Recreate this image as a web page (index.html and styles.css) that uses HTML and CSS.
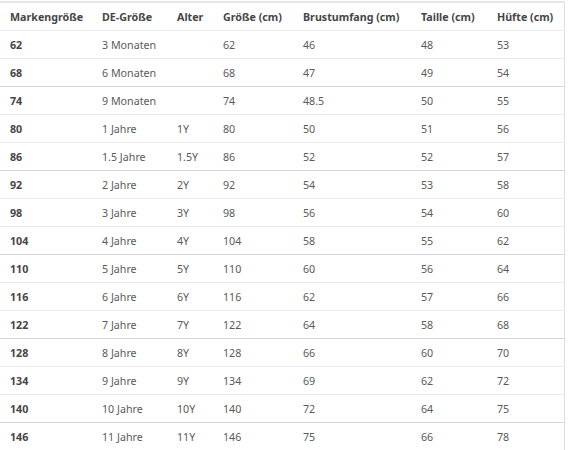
FILE: index.html
```html
<!DOCTYPE html>
<html lang="de">
<head>
<meta charset="utf-8">
<link rel="stylesheet" href="styles.css">
</head>
<body>
<div class="frame">
<table class="size-table">
  <colgroup>
    <col class="c1"><col class="c2"><col class="c3"><col class="c4"><col class="c5"><col class="c6"><col class="c7">
  </colgroup>
  <thead>
    <tr><th>Markengröße</th><th>DE-Größe</th><th>Alter</th><th>Größe (cm)</th><th>Brustumfang (cm)</th><th>Taille (cm)</th><th>Hüfte (cm)</th></tr>
  </thead>
  <tbody>
    <tr><th>62</th><td>3 Monaten</td><td></td><td>62</td><td>46</td><td>48</td><td>53</td></tr>
    <tr class="strong"><th>68</th><td>6 Monaten</td><td></td><td>68</td><td>47</td><td>49</td><td>54</td></tr>
    <tr><th>74</th><td>9 Monaten</td><td></td><td>74</td><td>48.5</td><td>50</td><td>55</td></tr>
    <tr><th>80</th><td>1 Jahre</td><td>1Y</td><td>80</td><td>50</td><td>51</td><td>56</td></tr>
    <tr class="strong"><th>86</th><td>1.5 Jahre</td><td>1.5Y</td><td>86</td><td>52</td><td>52</td><td>57</td></tr>
    <tr><th>92</th><td>2 Jahre</td><td>2Y</td><td>92</td><td>54</td><td>53</td><td>58</td></tr>
    <tr><th>98</th><td>3 Jahre</td><td>3Y</td><td>98</td><td>56</td><td>54</td><td>60</td></tr>
    <tr class="strong"><th>104</th><td>4 Jahre</td><td>4Y</td><td>104</td><td>58</td><td>55</td><td>62</td></tr>
    <tr><th>110</th><td>5 Jahre</td><td>5Y</td><td>110</td><td>60</td><td>56</td><td>64</td></tr>
    <tr><th>116</th><td>6 Jahre</td><td>6Y</td><td>116</td><td>62</td><td>57</td><td>66</td></tr>
    <tr class="strong"><th>122</th><td>7 Jahre</td><td>7Y</td><td>122</td><td>64</td><td>58</td><td>68</td></tr>
    <tr><th>128</th><td>8 Jahre</td><td>8Y</td><td>128</td><td>66</td><td>60</td><td>70</td></tr>
    <tr><th>134</th><td>9 Jahre</td><td>9Y</td><td>134</td><td>69</td><td>62</td><td>72</td></tr>
    <tr class="strong"><th>140</th><td>10 Jahre</td><td>10Y</td><td>140</td><td>72</td><td>64</td><td>75</td></tr>
    <tr><th>146</th><td>11 Jahre</td><td>11Y</td><td>146</td><td>75</td><td>66</td><td>78</td></tr>
  </tbody>
</table>
</div>
</body>
</html>
```
FILE: styles.css
```css
html, body {
  margin: 0;
  padding: 0;
  background: #ffffff;
}
.frame {
  padding-top: 1px;
  width: 564px;
}
.size-table {
  width: 564px;
  border-collapse: collapse;
  table-layout: fixed;
  font-family: "Noto Sans", "Open Sans", sans-serif;
  font-size: 10.7px;
  color: #5a5a5a;
  border-top: 2px solid #e6e6e6;
  border-right: 1px solid #dcdcdc;
}
.c1 { width: 92px; }
.c2 { width: 75px; }
.c3 { width: 46px; }
.c4 { width: 80px; }
.c5 { width: 118px; }
.c6 { width: 76px; }
.c7 { width: 77px; }
.size-table th,
.size-table td {
  height: 27px;
  padding: 0 0 0 10px;
  text-align: left;
  vertical-align: middle;
  white-space: nowrap;
  border-bottom: 1px solid #ebebeb;
}
.size-table th {
  font-weight: 700;
  color: #454545;
}
.size-table td {
  font-weight: 400;
}
.size-table tr.strong th,
.size-table tr.strong td {
  border-bottom-color: #d6d6d6;
}
.size-table tbody tr:last-child th,
.size-table tbody tr:last-child td {
  border-bottom: none;
}
```
